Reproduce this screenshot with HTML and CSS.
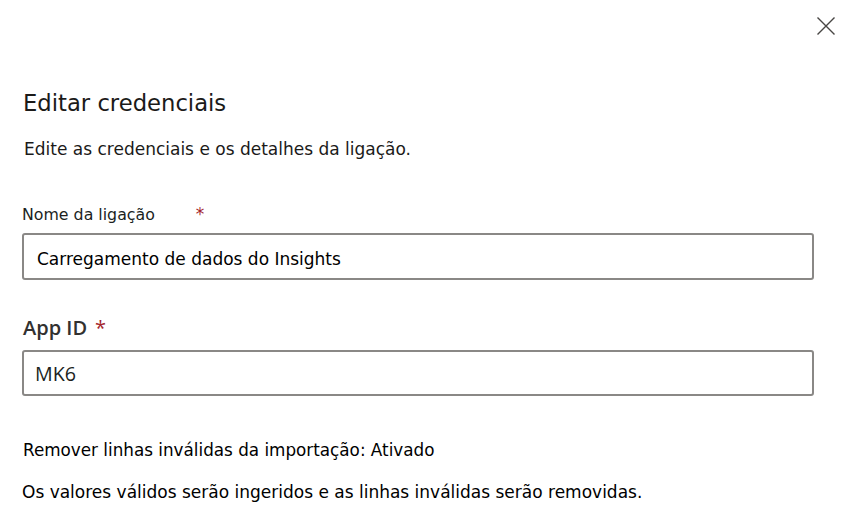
FILE: index.html
```html
<!DOCTYPE html>
<html lang="pt">
<head>
<meta charset="utf-8">
<title>Editar credenciais</title>
<link rel="stylesheet" href="styles.css">
</head>
<body>
<div class="panel">
  <div class="header">
    <button class="close" aria-label="Fechar">
      <svg width="18" height="18" viewBox="0 0 18 18" aria-hidden="true">
        <path d="M0.5 0.5 L17.5 17.5 M17.5 0.5 L0.5 17.5" stroke="#484644" stroke-width="1.4" fill="none"/>
      </svg>
    </button>
  </div>
  <h1 class="title">Editar credenciais</h1>
  <p class="subtitle">Edite as credenciais e os detalhes da ligação.</p>

  <div class="field-label"><span>Nome da ligação</span><span class="req req-wide">*</span></div>
  <div class="input">Carregamento de dados do Insights</div>

  <div class="field-label-strong">App ID<span class="req req-strong">*</span></div>
  <div class="input input-strong">MK6</div>

  <p class="note">Remover linhas inválidas da importação: Ativado</p>
  <p class="note note-last">Os valores válidos serão ingeridos e as linhas inválidas serão removidas.</p>
</div>
</body>
</html>
```
FILE: styles.css
```css
html, body {
  margin: 0;
  padding: 0;
  background: #ffffff;
}

body {
  font-family: "DejaVu Sans", "Liberation Sans", sans-serif;
  color: #201f1e;
}

.panel {
  display: flex;
  flex-direction: column;
  padding: 0 37px 0 22px;
}

.header {
  height: 88px;
  display: flex;
  justify-content: flex-end;
  align-items: flex-start;
  margin-right: -21px;
}

.close {
  margin-top: 17px;
  padding: 0;
  border: 0;
  background: transparent;
  width: 18px;
  height: 18px;
  display: flex;
}

.title {
  margin: 0;
  padding-left: 1px;
  font-size: 22.7px;
  line-height: 30px;
  font-weight: 400;
  color: #1b1a19;
}

.subtitle {
  margin: 19px 0 0;
  padding-left: 2px;
  font-size: 17px;
  line-height: 24px;
  color: #1b1a19;
}

.field-label {
  margin-top: 42px;
  display: flex;
  align-items: baseline;
  font-size: 15.8px;
  line-height: 22px;
  color: #201f1e;
}

.req {
  color: #a4262c;
}

.req-wide {
  margin-left: 41px;
  font-size: 17px;
}

.input {
  margin-top: 7px;
  box-sizing: border-box;
  height: 47px;
  border: 2px solid #8a8886;
  border-radius: 3px;
  padding: 6px 12px 0 13px;
  font-size: 17px;
  line-height: 36px;
  color: #000000;
  white-space: nowrap;
}

.field-label-strong {
  margin-top: 34px;
  padding-left: 1px;
  font-family: "Open Sans", "Liberation Sans", sans-serif;
  font-weight: 600;
  font-size: 20px;
  line-height: 28px;
  color: #323130;
}

.req-strong {
  margin-left: 8px;
  font-weight: 400;
}

.input-strong {
  margin-top: 8px;
  height: 46px;
  padding: 1px 12px 0 11px;
  font-family: "Open Sans", "Liberation Sans", sans-serif;
  font-size: 19.7px;
  line-height: 41px;
  color: #201f1e;
}

.note {
  margin: 42px 0 0;
  padding-left: 1px;
  font-size: 16.8px;
  line-height: 24px;
  color: #000000;
}

.note-last {
  margin-top: 18px;
  padding-left: 0;
  font-size: 17px;
}
```
